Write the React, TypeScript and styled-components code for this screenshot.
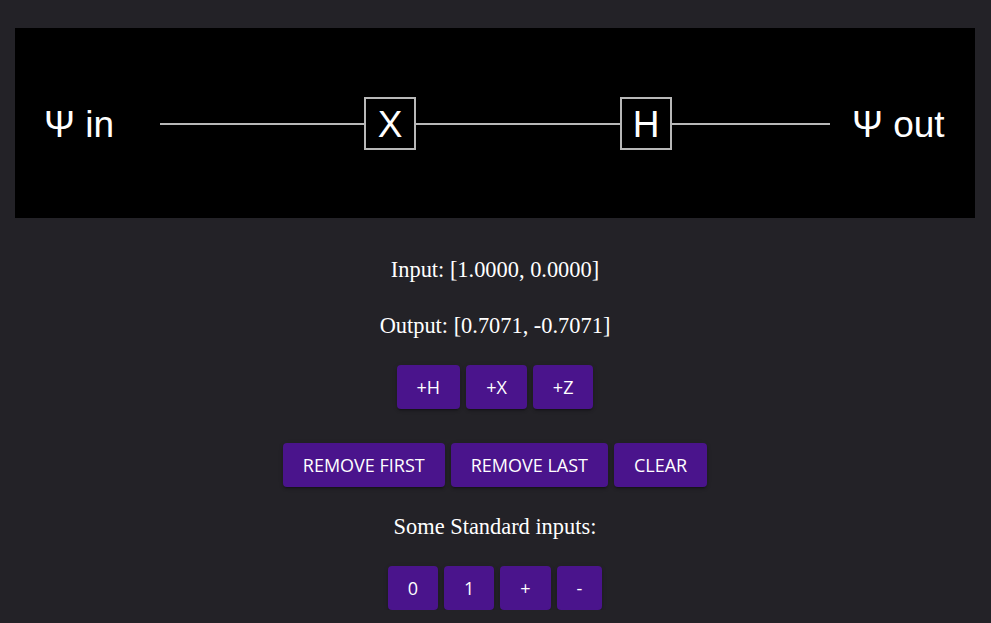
import React from "react";
import styled, { createGlobalStyle } from "styled-components";

const Global = createGlobalStyle`
  html, body {
    margin: 0;
    padding: 0;
    background: #232227;
  }
  body {
    font-family: "Liberation Serif", "Times New Roman", serif;
    color: #ffffff;
  }
`;

const Page = styled.div`
  display: flex;
  flex-direction: column;
  align-items: center;
  padding: 28px 16px 0 15px;
`;

const Circuit = styled.div`
  width: 100%;
  height: 190px;
  background: #000000;
  display: block;
`;

const StateLine = styled.p<{ $top: number }>`
  margin: ${(p) => p.$top}px 0 0;
  font-size: 22.4px;
  line-height: 26px;
  text-align: center;
  color: #ffffff;
`;

const ButtonRow = styled.div<{ $top: number }>`
  display: flex;
  gap: 6px;
  margin-top: ${(p) => p.$top}px;
`;

const GateButton = styled.button`
  height: 44px;
  padding: 0 20px;
  border: none;
  border-radius: 4px;
  background: #4a148c;
  color: #ffffff;
  font-family: "Open Sans", "Noto Sans", sans-serif;
  font-size: 18px;
  font-weight: 400;
  text-transform: uppercase;
  box-shadow: 0 3px 1px -2px rgba(0, 0, 0, 0.2), 0 2px 2px 0 rgba(0, 0, 0, 0.14),
    0 1px 5px 0 rgba(0, 0, 0, 0.12);
  cursor: pointer;
`;

const CircuitSvg: React.FC = () => (
  <svg width="100%" height="190" viewBox="0 0 960 190">
    <g fontFamily="'Liberation Sans', Arial, sans-serif" fill="#ffffff">
      <text x="29" y="109" fontSize="37">Ψ in</text>
      <text x="837" y="109" fontSize="37">Ψ out</text>
    </g>
    <g stroke="#b8b8b8" strokeWidth="2">
      <line x1="145" y1="96" x2="350" y2="96" />
      <line x1="400" y1="96" x2="605" y2="96" />
      <line x1="656" y1="96" x2="815" y2="96" />
      <rect x="350" y="70" width="50" height="51" fill="none" />
      <rect x="606" y="70" width="50" height="51" fill="none" />
    </g>
    <g fontFamily="'Liberation Sans', Arial, sans-serif" fill="#ffffff" fontSize="37" textAnchor="middle">
      <text x="375" y="109">X</text>
      <text x="631" y="109">H</text>
    </g>
  </svg>
);

export default function App() {
  return (
    <>
      <Global />
      <Page>
        <Circuit>
          <CircuitSvg />
        </Circuit>
        <StateLine $top={39}>Input: [1.0000, 0.0000]</StateLine>
        <StateLine $top={30}>Output: [0.7071, -0.7071]</StateLine>
        <ButtonRow $top={26}>
          <GateButton>+H</GateButton>
          <GateButton>+X</GateButton>
          <GateButton>+Z</GateButton>
        </ButtonRow>
        <ButtonRow $top={34}>
          <GateButton>Remove first</GateButton>
          <GateButton>Remove last</GateButton>
          <GateButton>Clear</GateButton>
        </ButtonRow>
        <StateLine $top={27}>Some Standard inputs:</StateLine>
        <ButtonRow $top={26}>
          <GateButton>0</GateButton>
          <GateButton>1</GateButton>
          <GateButton>+</GateButton>
          <GateButton>-</GateButton>
        </ButtonRow>
      </Page>
    </>
  );
}
